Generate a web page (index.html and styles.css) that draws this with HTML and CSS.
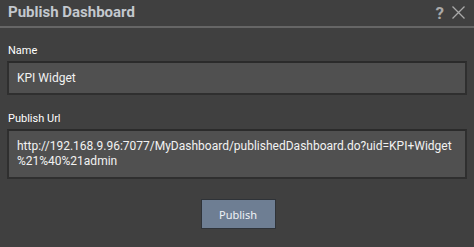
FILE: index.html
```html
<!DOCTYPE html>
<html>
<head>
<meta charset="utf-8">
<link rel="stylesheet" href="styles.css">
</head>
<body>
<div class="dialog">
  <div class="header">
    <div class="title">Publish Dashboard</div>
    <div class="tools">
      <span class="help">?</span>
      <svg class="close" width="13" height="13" viewBox="0 0 13 13"><path d="M0.5 0.5L12.5 12.5M12.5 0.5L0.5 12.5" stroke="#a9a9a9" stroke-width="1.3" fill="none"/></svg>
    </div>
  </div>
  <div class="body">
    <div class="label">Name</div>
    <div class="field input">KPI Widget</div>
    <div class="label">Publish Url</div>
    <div class="field area">http://192.168.9.96:7077/MyDashboard/publishedDashboard.do?uid=KPI+Widget<br>%21%40%21admin</div>
    <div class="actions"><button class="btn">Publish</button></div>
  </div>
</div>
</body>
</html>
```
FILE: styles.css
```css
html, body { margin: 0; padding: 0; }
body { background: #404040; font-family: Roboto, "Liberation Sans", sans-serif; width: 474px; height: 247px; overflow: hidden; }
.dialog { display: flex; flex-direction: column; }
.header { height: 28px; border-bottom: 2px solid #666; box-sizing: border-box; display: flex; align-items: center; justify-content: space-between; padding: 0 9px 0 8px; }
.title { font-size: 15px; font-weight: bold; color: #c3c8ce; padding-bottom: 2px; }
.tools { display: flex; align-items: center; gap: 8px; padding-bottom: 1px; }
.help { font-size: 17px; font-weight: bold; color: #a9a9a9; line-height: 16px; }
.close { display: block; }
.body { padding: 16px 7px 0 7px; display: flex; flex-direction: column; }
.label { font-size: 11px; color: #fff; padding-left: 1px; line-height: 13px; height: 17px; }
.field { background: #505050; border: 2px solid #2f2f2f; border-top-color: #2b2b2b; color: #f2f2f2; font-size: 12px; width: 460px; box-sizing: border-box; }
.input { height: 34px; line-height: 30px; padding-left: 8px; margin-bottom: 17px; }
.area { height: 50px; line-height: 15px; padding: 8px 8px 0 8px; margin-top: 0; }
.actions { display: flex; justify-content: center; padding-top: 20px; padding-left: 2px; }
.btn { width: 75px; height: 30px; background: #6e7e93; border: 1px solid #2f3338; color: #eef2f6; font-family: "Noto Sans", "DejaVu Sans", sans-serif; font-size: 11px; padding: 0; }
```
